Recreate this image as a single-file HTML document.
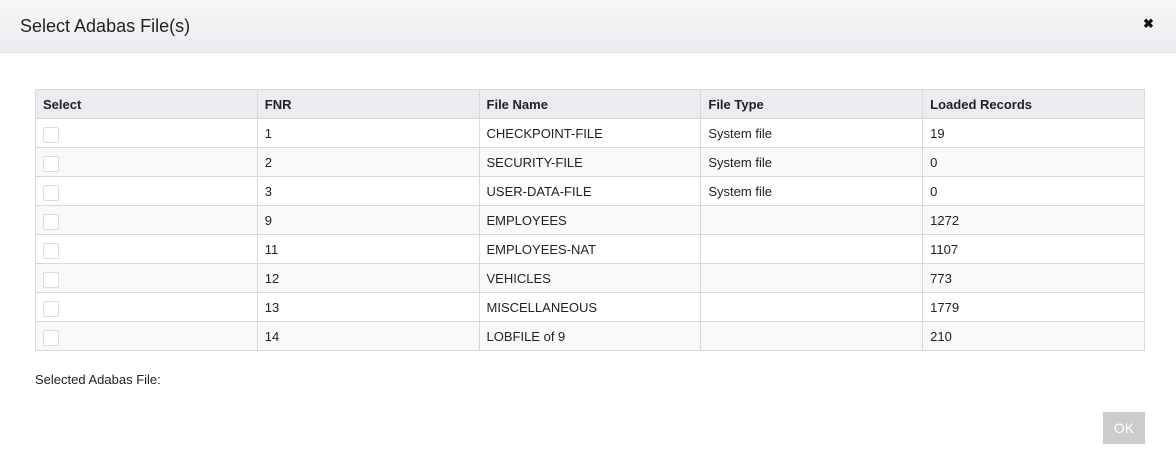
<!DOCTYPE html>
<html><head><style>
body{margin:0;width:1176px;height:475px;background:#fff;font-family:"Liberation Sans",Arial,sans-serif;font-size:13px;color:#222;position:relative;overflow:hidden}
.hdr{position:absolute;left:0;top:0;width:1176px;height:53px;background:linear-gradient(#f6f7f8,#ebecef);border-bottom:1px solid #e2e3e6;box-sizing:border-box}
.hdr .t{position:absolute;left:20px;top:16px;font-size:18px;color:#222}
.hdr .x{position:absolute;left:1143px;top:16px;font-size:13px;font-weight:bold;color:#111}
table{position:absolute;left:35px;top:89px;border-collapse:collapse;width:1110px}
td,th{border:1px solid #d8d8d8;height:28px;padding:0 0 0 7px;text-align:left;font-size:13px;width:214px}
th{background:#ebecef;font-weight:bold}
tr:nth-child(odd) td{background:#f9f9f9}
tr:nth-child(even) td{background:#fff}
.cb{display:inline-block;width:14px;height:14px;border:1px solid #ddd;border-radius:2px;background:#fff;vertical-align:middle;position:relative;top:2px}
.sel{position:absolute;left:35px;top:372px}
.ok{position:absolute;left:1103px;top:412px;width:42px;height:32px;background:#ccc;color:#fff;font-size:14px;text-align:center;line-height:32px}
</style></head><body>
<div class="hdr"><div class="t">Select Adabas File(s)</div><div class="x">✖</div></div>
<table>
<tr><th>Select</th><th>FNR</th><th>File Name</th><th>File Type</th><th>Loaded Records</th></tr>
<tr><td><span class="cb"></span></td><td>1</td><td>CHECKPOINT-FILE</td><td>System file</td><td>19</td></tr>
<tr><td><span class="cb"></span></td><td>2</td><td>SECURITY-FILE</td><td>System file</td><td>0</td></tr>
<tr><td><span class="cb"></span></td><td>3</td><td>USER-DATA-FILE</td><td>System file</td><td>0</td></tr>
<tr><td><span class="cb"></span></td><td>9</td><td>EMPLOYEES</td><td></td><td>1272</td></tr>
<tr><td><span class="cb"></span></td><td>11</td><td>EMPLOYEES-NAT</td><td></td><td>1107</td></tr>
<tr><td><span class="cb"></span></td><td>12</td><td>VEHICLES</td><td></td><td>773</td></tr>
<tr><td><span class="cb"></span></td><td>13</td><td>MISCELLANEOUS</td><td></td><td>1779</td></tr>
<tr><td><span class="cb"></span></td><td>14</td><td>LOBFILE of 9</td><td></td><td>210</td></tr>
</table>
<div class="sel">Selected Adabas File:</div>
<div class="ok">OK</div>
</body></html>
